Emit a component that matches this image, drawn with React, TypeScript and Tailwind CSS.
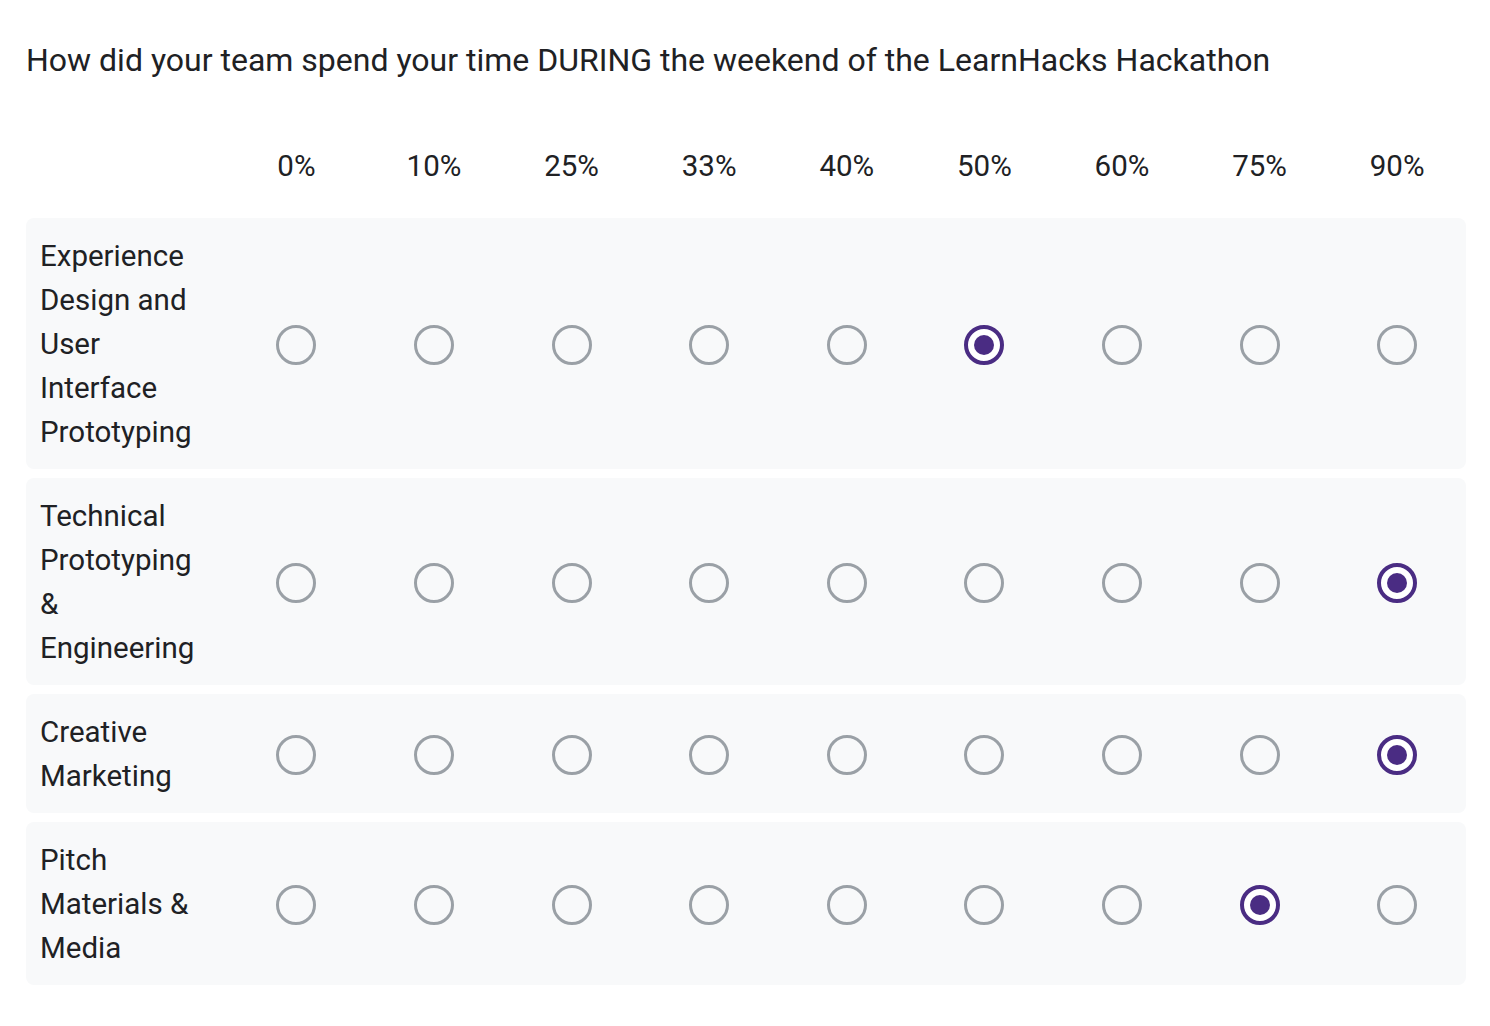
import React, { useState } from "react";

const COLUMNS = ["0%", "10%", "25%", "33%", "40%", "50%", "60%", "75%", "90%"];

const ROWS = [
  { label: "Experience Design and User Interface Prototyping", value: "50%" },
  { label: "Technical Prototyping & Engineering", value: "90%" },
  { label: "Creative Marketing", value: "90%" },
  { label: "Pitch Materials & Media", value: "75%" },
];

function Radio({ checked, onClick }: { checked: boolean; onClick: () => void }) {
  if (checked) {
    return (
      <button
        onClick={onClick}
        className="flex h-10 w-10 items-center justify-center rounded-full border-4 border-[#4a2c83] bg-white"
      >
        <span className="h-5 w-5 rounded-full bg-[#4a2c83]" />
      </button>
    );
  }
  return (
    <button
      onClick={onClick}
      className="h-10 w-10 rounded-full border-[3px] border-[#9aa0a6] bg-transparent"
    />
  );
}

export default function App() {
  const [answers, setAnswers] = useState(ROWS.map((r) => r.value));

  return (
    <div className="min-h-screen bg-white pl-[26px] pt-[36px] font-['Roboto',sans-serif] text-[#202124]">
      <h1 className="text-[32px] leading-[48px]">
        How did your team spend your time DURING the weekend of the LearnHacks Hackathon
      </h1>

      <div className="w-[1440px]">
        <div className="mt-[60px] flex text-[29.5px] leading-[44px]">
          <div className="w-[201.6px] shrink-0" />
          {COLUMNS.map((c) => (
            <div key={c} className="flex-1 text-center">
              {c}
            </div>
          ))}
        </div>

        <div className="mt-[30px] flex flex-col gap-[9px]">
          {ROWS.map((row, i) => (
            <div key={row.label} className="flex items-center rounded-lg bg-[#f8f9fa] pb-[15px] pt-[16px]">
              <div className="w-[201.6px] shrink-0 pl-[14px] pr-[24px] text-[29.5px] leading-[44px]">
                {row.label}
              </div>
              {COLUMNS.map((c) => (
                <div key={c} className="flex flex-1 justify-center pt-[2px]">
                  <Radio
                    checked={answers[i] === c}
                    onClick={() => setAnswers((a) => a.map((v, j) => (j === i ? c : v)))}
                  />
                </div>
              ))}
            </div>
          ))}
        </div>
      </div>
    </div>
  );
}
